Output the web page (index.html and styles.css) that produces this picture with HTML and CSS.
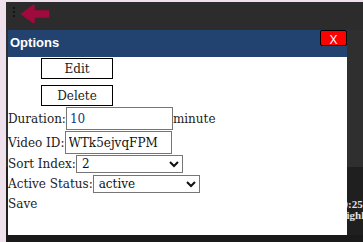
FILE: index.html
```html
<!DOCTYPE html>
<html lang="en">

<head>
    <meta charset="UTF-8">
    <meta name="viewport" content="width=device-width, initial-scale=1.0">
    <title>Options</title>
    <link rel="stylesheet" href="styles.css">
</head>

<body>
    <div class="app">
        <div class="toolbar">
            <svg class="handle" width="4" height="13" viewBox="0 0 4 13">
                <rect x="1" y="1" width="2" height="2" fill="#141414" />
                <rect x="1" y="5" width="2" height="2" fill="#141414" />
                <rect x="1" y="9" width="2" height="2" fill="#141414" />
            </svg>
            <svg class="back" width="30" height="20" viewBox="0 0 30 20">
                <path d="M1.5 10 L13 1.5 L14 1.5 L14 7 L28.5 7 L28.5 13 L14 13 L14 18.5 L13 18.5 Z"
                    fill="#a10a3d" stroke="#a10a3d" stroke-width="1.5" stroke-linejoin="round" />
            </svg>
        </div>
        <div class="feed">
            <div class="feed_top"></div>
            <div class="feed_item">
                <div class="feed_time">10:25</div>
                <div class="feed_title">Highlights</div>
            </div>
        </div>

        <div class="dialog">
            <div class="dialog_head">
                <span class="dialog_title">Options</span>
                <button class="close">X</button>
            </div>
            <div class="dialog_body">
                <button class="action">Edit</button>
                <button class="action">Delete</button>
                <div class="row first">
                    <label>Duration:</label><input class="field duration" type="text" value="10"><span>minute</span>
                </div>
                <div class="row">
                    <label>Video ID:</label><input class="field" type="text" value="WTk5ejvqFPM">
                </div>
                <div class="row pick">
                    <label>Sort Index:</label><select class="field">
                        <option>1</option>
                        <option selected>2</option>
                        <option>3</option>
                    </select>
                </div>
                <div class="row pick last">
                    <label>Active Status:</label><select class="field">
                        <option selected>active</option>
                        <option>inactive</option>
                    </select>
                </div>
                <div class="save">Save</div>
            </div>
        </div>
    </div>
</body>

</html>
```

FILE: styles.css
```css
html,
body {
    margin: 0;
    padding: 0;
}

body {
    background: #f0e2ec;
    overflow: hidden;
}

.app {
    position: relative;
    margin: 2px 0 0 6px;
    height: 240px;
    background: #2c2c2c;
    overflow: hidden;
}

.toolbar {
    display: flex;
    align-items: flex-start;
    height: 28px;
}

.toolbar .handle {
    margin: 4px 0 0 6px;
}

.toolbar .back {
    margin: 2px 0 0 4px;
}

.feed {
    border-bottom: 7px solid #1a1a1a;
}

.feed_top {
    height: 137px;
    background: #2f2f2f;
}

.feed_item {
    height: 68px;
    background: #1f1f1f;
    padding: 32px 0 0 331px;
    box-sizing: border-box;
    font-family: "Liberation Serif", serif;
    font-weight: bold;
    font-size: 11px;
    line-height: 11px;
    color: #e2e2e2;
    white-space: nowrap;
}

.feed_title {
    margin-left: 1px;
}

.dialog {
    position: absolute;
    left: 2px;
    top: 28px;
    width: 339px;
    height: 205px;
    background: #fff;
    display: flex;
    flex-direction: column;
}

.dialog_head {
    display: flex;
    justify-content: space-between;
    align-items: flex-start;
    height: 27px;
    background: #22436f;
}

.dialog_title {
    font-family: "Liberation Sans", Arial, sans-serif;
    font-weight: bold;
    font-size: 13px;
    color: #fff;
    margin: 5px 0 0 2px;
    line-height: 16px;
}

.close {
    width: 27px;
    height: 16px;
    margin: 0;
    padding: 4px 0 0;
    box-sizing: border-box;
    background: #ff0000;
    border: 1px solid #000;
    border-radius: 2px;
    color: #fff;
    font-family: "Liberation Sans", Arial, sans-serif;
    font-size: 12px;
    line-height: 11px;
    overflow: hidden;
}

.dialog_body {
    flex: 1;
    padding-top: 1px;
    font-family: "DejaVu Serif", serif;
    font-size: 12px;
    color: #222;
}

.action {
    display: block;
    width: 72px;
    height: 21px;
    margin: 0 0 6px 33px;
    padding: 0;
    background: #fff;
    border: 1px solid #000;
    border-radius: 0;
    font-family: "DejaVu Serif", serif;
    font-size: 12px;
    color: #222;
}

.row {
    display: flex;
    align-items: baseline;
    margin-top: 1px;
    white-space: nowrap;
}

.row.first {
    margin-top: -5px;
}

.row.last {
    margin-top: 2px;
}

.field {
    width: 107px;
    height: 23px;
    box-sizing: border-box;
    margin: 0;
    padding: 0 3px;
    border: 1px solid #767676;
    border-radius: 0;
    background: #fff;
    font-family: "DejaVu Serif", serif;
    font-size: 12px;
    color: #111;
}

.field.duration {
    color: #123a82;
}

.pick .field {
    height: 18px;
    padding: 0 1px;
}

.save {
    margin-top: 4px;
    line-height: 14px;
}
```
